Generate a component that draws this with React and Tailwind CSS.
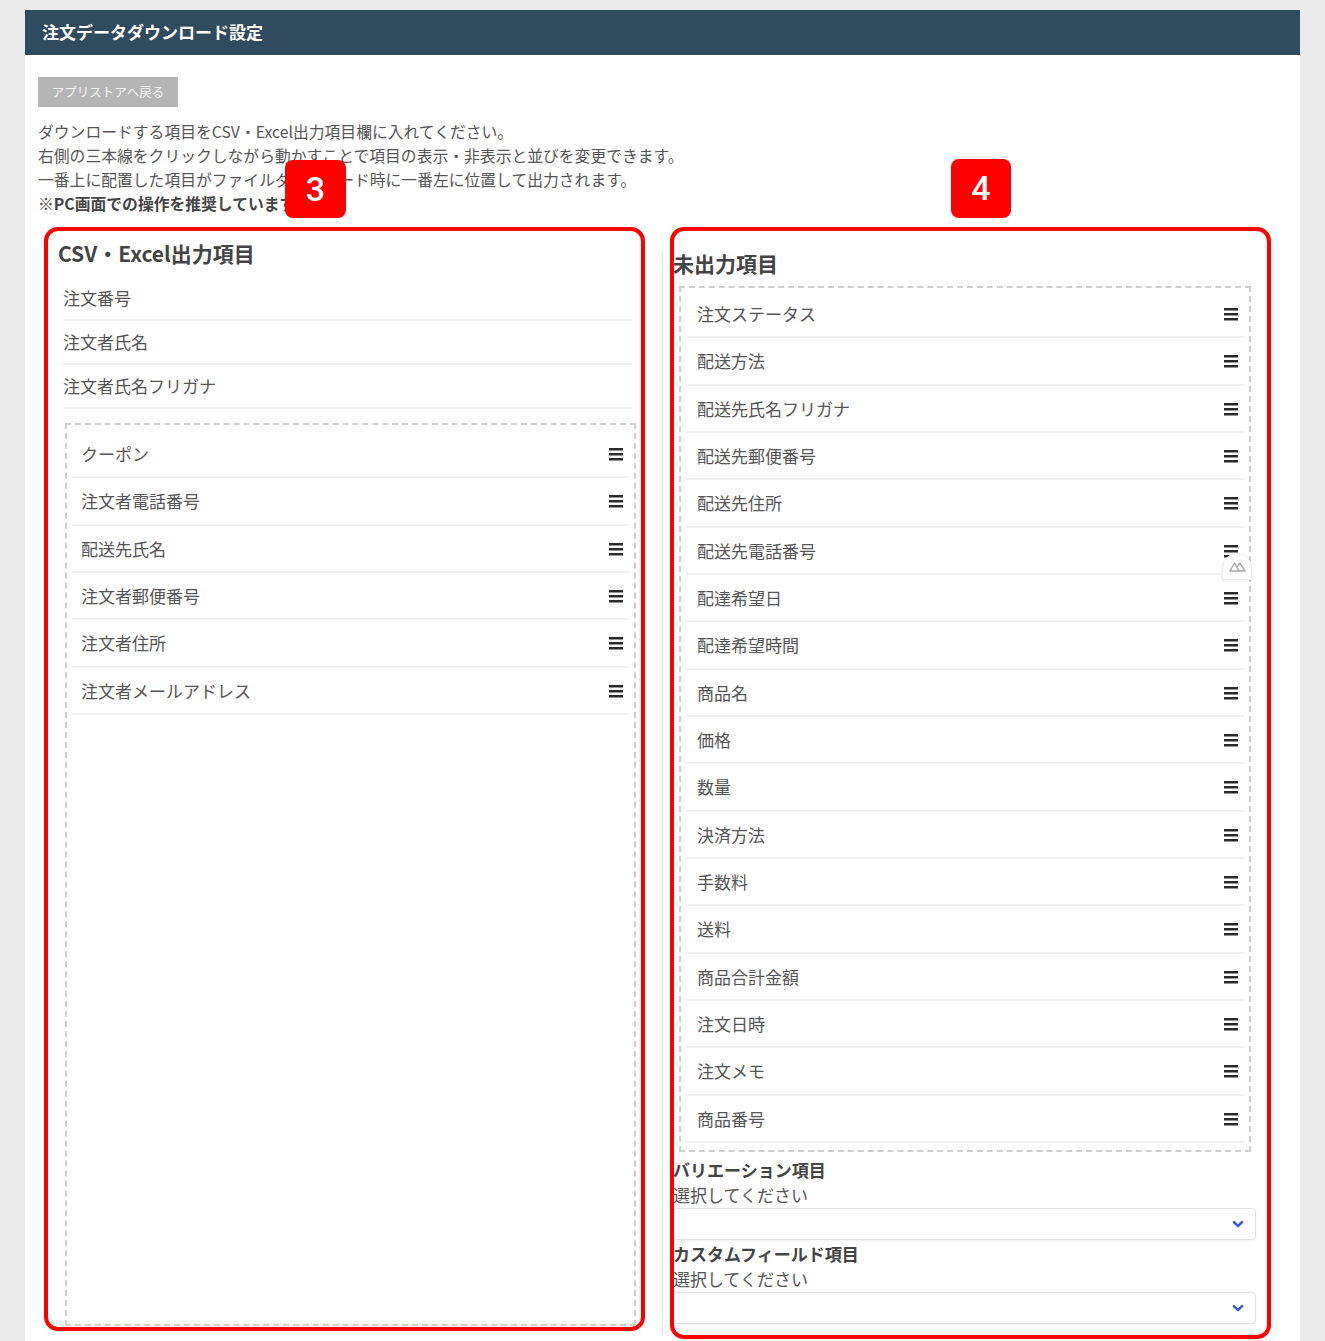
import React from "react";

const fixedItems = ["注文番号", "注文者氏名", "注文者氏名フリガナ"];
const leftItems = ["クーポン", "注文者電話番号", "配送先氏名", "注文者郵便番号", "注文者住所", "注文者メールアドレス"];
const rightItems = [
  "注文ステータス", "配送方法", "配送先氏名フリガナ", "配送先郵便番号", "配送先住所", "配送先電話番号",
  "配達希望日", "配達希望時間", "商品名", "価格", "数量", "決済方法", "手数料", "送料",
  "商品合計金額", "注文日時", "注文メモ", "商品番号",
];

function Burger() {
  return (
    <div className="flex w-[14px] flex-col gap-[3px]">
      <div className="h-[2px] w-full bg-[#2a2a2a] shadow-[0_0.5px_0_#2a2a2a]" />
      <div className="h-[2px] w-full bg-[#2a2a2a] shadow-[0_0.5px_0_#2a2a2a]" />
      <div className="h-[2px] w-full bg-[#2a2a2a] shadow-[0_0.5px_0_#2a2a2a]" />
    </div>
  );
}

function DragItem({ label, tall, right }) {
  return (
    <div
      className={
        "flex items-center justify-between border-b-2 border-[#f2f2f2] pr-[6px] text-[17px] text-[#555] " +
        (tall ? "h-[48px] " : "h-[47px] ") +
        (right ? "pl-[11px]" : "pl-[9px]")
      }
    >
      <span>{label}</span>
      <Burger />
    </div>
  );
}

function Chevron() {
  return (
    <svg width="12" height="9" viewBox="0 0 12 9" className="mr-[11px]">
      <path d="M2 2.2 L6 6.2 L10 2.2" fill="none" stroke="#3b5bcc" strokeWidth="2.6" strokeLinecap="round" strokeLinejoin="round" />
    </svg>
  );
}

function SelectBlock({ title }) {
  return (
    <div className="flex flex-col">
      <div className="text-[17px] font-bold leading-[24px] text-[#444]">{title}</div>
      <div className="mt-[1px] text-[17px] leading-[24px] text-[#555]">選択してください</div>
      <div className="mt-[1px] flex h-[32px] w-[583px] items-center justify-end rounded-[4px] border border-[#e2e2e2] bg-white shadow-[0_1px_2px_rgba(0,0,0,0.05)]">
        <Chevron />
      </div>
    </div>
  );
}

export default function App() {
  return (
    <div
      className="relative h-[1341px] overflow-hidden bg-[#ebebeb] px-[25px] pt-[10px]"
      style={{ fontFamily: "'Noto Sans CJK JP', 'Noto Sans', sans-serif" }}
    >
      <div className="flex h-[1331px] flex-col bg-white">
        <div className="flex h-[45px] items-center bg-[#304b5e] px-[17px] pb-[1px] text-[17px] font-bold text-white">
          注文データダウンロード設定
        </div>
        <div className="flex flex-col pl-[13px] pr-[13px] pt-[22px]">
          <div className="flex h-[30px] w-[140px] items-center justify-center bg-[#b5b5b5] text-[12.5px] text-[#f3f3f3]">
            アプリストアへ戻る
          </div>
          <div className="mt-[13px] text-[15.8px] leading-[24px] text-[#555]">
            <div>ダウンロードする項目をCSV・Excel出力項目欄に入れてください。</div>
            <div>右側の三本線をクリックしながら動かすことで項目の表示・非表示と並びを変更できます。</div>
            <div>一番上に配置した項目がファイルダウンロード時に一番左に位置して出力されます。</div>
            <div className="font-bold text-[#444]">※PC画面での操作を推奨しています。</div>
          </div>
          <div className="flex">
            {/* left column */}
            <div className="flex w-[624px] flex-col pl-[20px] pt-[25px]">
              <div className="text-[21px] font-bold leading-[24px] text-[#444]">CSV・Excel出力項目</div>
              <div className="ml-[5px] mt-[12px] w-[569px]">
                {fixedItems.map((t) => (
                  <div key={t} className="flex h-[44px] items-center border-b-2 border-[#f2f2f2] text-[17px] text-[#555]">
                    {t}
                  </div>
                ))}
              </div>
              <div className="ml-[7px] mt-[14px] h-[903px] w-[571px] border-2 border-dashed border-[#cfcfcf] px-[5px] pt-[6px]">
                {leftItems.map((t, i) => (
                  <DragItem key={t} label={t} tall={i % 3 === 1} />
                ))}
              </div>
            </div>
            {/* right column */}
            <div className="mt-[35px] flex w-[625px] flex-col border-l border-[#e6e6e6] pb-[12px] pl-[10px]">
              <div className="text-[21px] font-bold leading-[24px] text-[#444]">未出力項目</div>
              <div className="ml-[6px] mt-[11px] w-[572px] border-2 border-dashed border-[#cfcfcf] px-[5px] pb-[7px] pt-[3px]">
                {rightItems.map((t, i) => (
                  <DragItem key={t} label={t} tall={i % 3 === 1} right />
                ))}
              </div>
              <div className="mt-[6px]">
                <SelectBlock title="バリエーション項目" />
              </div>
              <div className="mt-[2px]">
                <SelectBlock title="カスタムフィールド項目" />
              </div>
            </div>
          </div>
        </div>
      </div>

      {/* floating devtools tab */}
      <div className="absolute left-[1222px] top-[553px] flex h-[27px] w-[30px] items-center justify-center rounded-t-[15px] border border-[#ececec] bg-white shadow-[0_1px_3px_rgba(0,0,0,0.08)]">
        <svg width="17" height="11" viewBox="0 0 17 11">
          <path d="M1 10 L5.5 2 L10 10 Z M8 6.5 L10.8 2 L16 10 L10 10" fill="none" stroke="#a9a9a9" strokeWidth="1.4" strokeLinejoin="round" />
        </svg>
      </div>

      {/* annotation boxes */}
      <div className="absolute left-[44px] top-[227px] h-[1104px] w-[601px] rounded-[14px] border-[4px] border-[#ff0000]" />
      <div className="absolute left-[670px] top-[227px] h-[1112px] w-[601px] rounded-[14px] border-[4px] border-[#ff0000]" />
      <div
        className="absolute left-[285px] top-[160px] flex h-[58px] w-[61px] items-center justify-center rounded-[8px] bg-[#ff0000] text-[34px] font-medium text-white"
        style={{ fontFamily: "Roboto, sans-serif" }}
      >
        3
      </div>
      <div
        className="absolute left-[951px] top-[159px] flex h-[59px] w-[60px] items-center justify-center rounded-[8px] bg-[#ff0000] text-[34px] font-medium text-white"
        style={{ fontFamily: "Roboto, sans-serif" }}
      >
        4
      </div>
    </div>
  );
}
